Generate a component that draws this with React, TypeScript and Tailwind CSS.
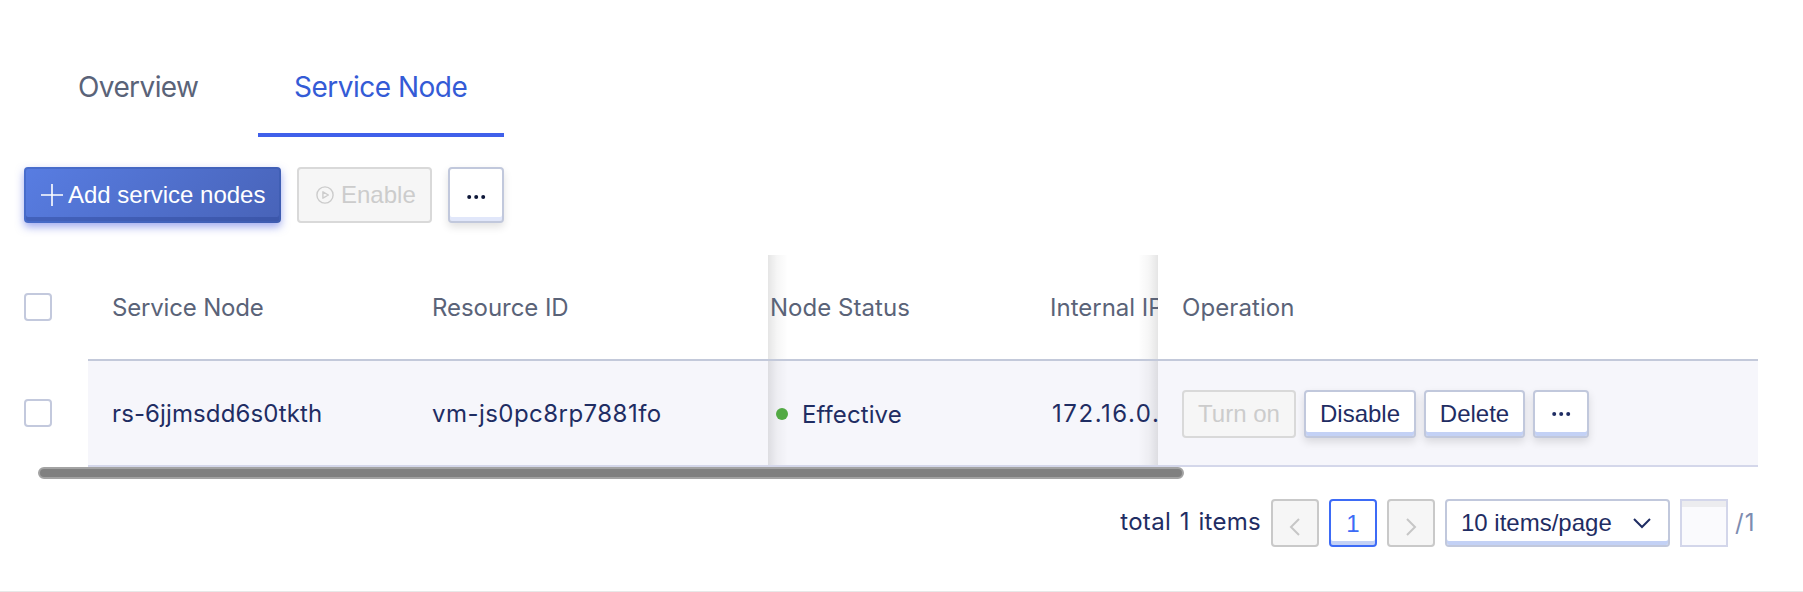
import React from "react";

const arial = "font-['Liberation_Sans',Arial,sans-serif]";

const scrollShade =
  "bg-[linear-gradient(90deg,rgba(0,0,0,0.10),rgba(0,0,0,0.035)_9px,transparent_20px),linear-gradient(270deg,rgba(0,0,0,0.10),rgba(0,0,0,0.035)_9px,transparent_20px)] bg-no-repeat bg-origin-padding";

function Dots({ className }: { className: string }) {
  return (
    <svg viewBox="0 0 20 6" className={className} fill="currentColor">
      <circle cx="3.2" cy="3" r="2" />
      <circle cx="10.2" cy="3" r="2" />
      <circle cx="17.2" cy="3" r="2" />
    </svg>
  );
}

function Checkbox() {
  return <span className="block h-7 w-7 rounded-[4px] border-2 border-[#c3c9dd] bg-white" />;
}

function Chevron({ points, className }: { points: string; className: string }) {
  return (
    <svg viewBox="0 0 18 18" className={className} fill="none" stroke="currentColor" strokeWidth="2">
      <polyline points={points} />
    </svg>
  );
}

function RowButton({ width, children }: { width: string; children: React.ReactNode }) {
  return (
    <button
      className={`${width} ${arial} flex h-12 shrink-0 items-center justify-center rounded-[4px] border-2 border-[#c1c8dc] bg-white text-[24px] leading-none text-[#1f2d63] shadow-[inset_0_-4px_0_#c3d1f5,0_4px_8px_rgba(0,0,0,0.12)]`}
    >
      {children}
    </button>
  );
}

export default function App() {
  return (
    <div className="flex h-[592px] w-[1803px] flex-col overflow-hidden border-b border-[#e8e8e8] bg-white font-[Inter,sans-serif]">
      <nav className="flex h-[137px] pl-6 text-[28px] leading-[34px] text-[#5a6378]">
        <div className="w-[234px] pt-[70px] pl-[54px] tracking-[-0.6px]">Overview</div>
        <div className="w-[246px] border-b-4 border-[#4060ea] pt-[70px] pl-9 tracking-[-0.5px] whitespace-nowrap text-[#345bd6]">
          Service Node
        </div>
      </nav>

      <div className={`${arial} flex gap-4 pt-[30px] pl-6 text-[24px] leading-none`}>
        <button className="flex h-14 w-[257px] items-center rounded-[4px] border-2 border-[#294b9e]/30 bg-[linear-gradient(135deg,#587de2,#4863b8)] bg-origin-border pl-[15px] text-white shadow-[inset_0_-4px_0_rgba(48,73,155,0.5),0_4px_8px_rgba(70,90,225,0.5)]">
          <svg viewBox="0 0 22 22" className="mr-[5px] h-[22px] w-[22px]" fill="none" stroke="currentColor" strokeWidth="1.6">
            <path d="M11 0v22M0 11h22" />
          </svg>
          <span className="whitespace-nowrap">Add service nodes</span>
        </button>
        <button className="flex h-14 w-[135px] items-center rounded-[4px] border-2 border-[#d9d9d9] bg-[#f6f6f6] pl-[17px] text-[#cccccc]">
          <svg viewBox="0 0 18 18" className="mr-[7px] h-[18px] w-[18px]" fill="none" stroke="currentColor" strokeWidth="1.4">
            <circle cx="9" cy="9" r="8.1" />
            <path d="M6.9 5.8v6.4L12.4 9z" strokeLinejoin="round" />
          </svg>
          <span>Enable</span>
        </button>
        <button className="flex h-14 w-14 items-center justify-center rounded-[4px] border-2 border-[#c1c8dc] bg-white pt-1 text-[#0e1738] shadow-[inset_0_-4px_0_#e1e7fa,0_4px_8px_rgba(0,0,0,0.12)]">
          <Dots className="h-[6px] w-5" />
        </button>
      </div>

      <div className="mt-8 flex h-[212px] pl-6 text-[24px] leading-[30px]">
        <div className="w-16">
          <div className="h-[106px] pt-[38px]"><Checkbox /></div>
          <div className="pt-[38px]"><Checkbox /></div>
        </div>

        <div className="w-[680px]">
          <div className="flex h-[106px] border-b-2 border-[#c3c9da] pt-[38px] pl-6 text-[#5a6378]">
            <div className="w-80 tracking-[-0.17px]">Service Node</div>
            <div className="tracking-[-0.05px]">Resource ID</div>
          </div>
          <div className="flex h-[106px] border-b-2 border-[#d4d7ea] bg-[#f6f6fb] pt-[38px] pl-6 text-[#1f2d63]">
            <div className="w-80 tracking-[0.11px]">rs-6jjmsdd6s0tkth</div>
            <div className="tracking-[0.46px]">vm-js0pc8rp7881fo</div>
          </div>
        </div>

        <div className="w-[390px] overflow-hidden">
          <div className={`${scrollShade} flex h-[106px] border-b-2 border-[#c3c9da] pt-[38px] pl-[2px] whitespace-nowrap text-[#5a6378]`}>
            <div className="w-[280px] shrink-0 tracking-[0.04px]">Node Status</div>
            <div className="shrink-0">Internal IP</div>
          </div>
          <div className={`${scrollShade} flex h-[106px] border-b-2 border-[#d4d7ea] bg-[#f6f6fb] pt-[38px] pl-2 whitespace-nowrap text-[#1f2d63]`}>
            <div className="flex w-[276px] shrink-0">
              <span className="mt-[9px] mr-[14px] h-3 w-3 rounded-full bg-[#52a944]" />
              <span className="pt-px tracking-[0.1px]">Effective</span>
            </div>
            <div className="shrink-0 tracking-[1.55px]">172.16.0.</div>
          </div>
        </div>

        <div className="w-[600px]">
          <div className="h-[106px] border-b-2 border-[#c3c9da] pt-[38px] pl-6 tracking-[0.08px] text-[#5a6378]">Operation</div>
          <div className="flex h-[106px] gap-2 border-b-2 border-[#d4d7ea] bg-[#f6f6fb] pt-[29px] pl-6">
            <button className={`${arial} flex h-12 w-[114px] items-center justify-center rounded-[4px] border-2 border-[#d9d9d9] bg-[#f6f6f6] text-[24px] leading-none text-[#cccccc]`}>
              Turn on
            </button>
            <RowButton width="w-[112px]">Disable</RowButton>
            <RowButton width="w-[101px]">Delete</RowButton>
            <RowButton width="w-[56px]"><Dots className="h-[6px] w-5" /></RowButton>
          </div>
        </div>
      </div>

      <div className="ml-[38px] h-3 w-[1146px] shrink-0 rounded-full border-2 border-[#a3a3a3] bg-[#808080]" />

      <div className="mt-5 flex h-12 w-[1758px] justify-end text-[24px] leading-[30px] text-[#1f2d63]">
        <span className="mr-[10px] pt-2 tracking-[0.3px] [word-spacing:1.6px] whitespace-nowrap">total 1 items</span>
        <button className="mr-[10px] flex w-12 items-center justify-center rounded-[4px] border-2 border-[#c9c9c9] bg-[#f6f6f6] pt-[7px] text-[#c6c6c6]">
          <Chevron points="13,1 5,9 13,17" className="h-[18px] w-[18px]" />
        </button>
        <button className={`${arial} mr-[10px] flex w-12 items-center justify-center rounded-[4px] border-2 border-[#3d6bf6] bg-white pt-px text-[#3d6bf6] shadow-[inset_0_-4px_0_#c3d1f5]`}>
          1
        </button>
        <button className="mr-[10px] flex w-12 items-center justify-center rounded-[4px] border-2 border-[#c9c9c9] bg-[#f6f6f6] pt-[7px] text-[#c6c6c6]">
          <Chevron points="5,1 13,9 5,17" className="h-[18px] w-[18px]" />
        </button>
        <button className={`${arial} mr-[10px] flex w-[225px] items-center rounded-[4px] border-2 border-[#c1c8dc] bg-white pl-[14px] shadow-[inset_0_-4px_0_#c3d1f5]`}>
          <span className="whitespace-nowrap">10 items/page</span>
          <Chevron points="1,5 9,13 17,5" className="ml-[21px] h-[18px] w-[18px]" />
        </button>
        <span className="mr-[7px] block w-12 border-2 border-[#d3d6ea] bg-[#fafafd] shadow-[inset_0_6px_0_#ececef]" />
        <span className="w-[23px] pt-[9px] tracking-[1px] text-[#7d8cb0]">/1</span>
      </div>
    </div>
  );
}
